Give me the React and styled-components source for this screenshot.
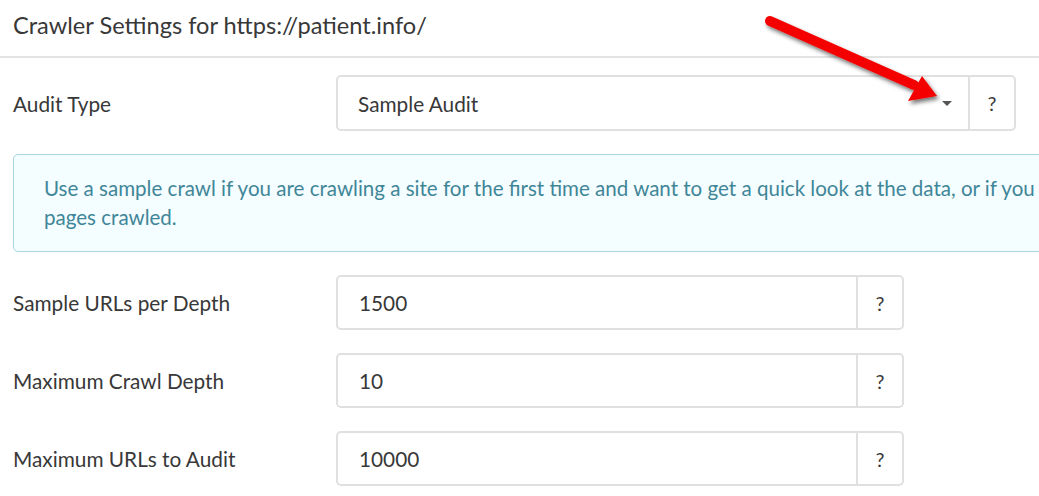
import React from 'react';
import styled, { createGlobalStyle } from 'styled-components';

const GlobalStyle = createGlobalStyle`
  html, body {
    margin: 0;
    padding: 0;
    overflow: hidden;
    background: #fff;
  }
  body {
    font-family: Lato, 'Open Sans', sans-serif;
    color: #383838;
  }
`;

const fields = [
  { label: 'Sample URLs per Depth', value: '1500' },
  { label: 'Maximum Crawl Depth', value: '10' },
  { label: 'Maximum URLs to Audit', value: '10000' },
];

const Caret = () => (
  <svg width='10' height='5' viewBox='0 0 10 5'>
    <path d='M0 0 L10 0 L5 5 Z' fill='#555' />
  </svg>
);

// red annotation arrow pointing at the dropdown caret
const Arrow = () => (
  <ArrowLayer width='1039' height='140' viewBox='0 0 1039 140'>
    <defs>
      <filter id='arrow-shadow' x='-20%' y='-20%' width='140%' height='140%'>
        <feDropShadow dx='2' dy='3' stdDeviation='2' floodColor='#000' floodOpacity='0.55' />
      </filter>
    </defs>
    <g filter='url(#arrow-shadow)'>
      <line x1='770' y1='21' x2='914' y2='85' stroke='#f40000' strokeWidth='10' strokeLinecap='round' />
      <path d='M937 96 L908 101 L922 76 Z' fill='#f40000' />
    </g>
  </ArrowLayer>
);

const App = () => {
  return (
    <Page>
      <GlobalStyle />
      <Header>Crawler Settings for https://patient.info/</Header>
      <Form>
        <FormRow>
          <Label>Audit Type</Label>
          <InputGroup width={680} height={56}>
            <Select>
              <span>Sample Audit</span>
              <Caret />
            </Select>
            <Addon>?</Addon>
          </InputGroup>
        </FormRow>
        <Info>
          Use a sample crawl if you are crawling a site for the first time and want to get a
          quick look at the data, or if you only want a limited number of
          <br />
          pages crawled.
        </Info>
        {fields.map((f) => (
          <FormRow key={f.label}>
            <Label>{f.label}</Label>
            <InputGroup width={568} height={55}>
              <Field defaultValue={f.value} />
              <Addon>?</Addon>
            </InputGroup>
          </FormRow>
        ))}
      </Form>
      <Arrow />
    </Page>
  );
};

export default App;

const Page = styled.div`
  position: relative;
  width: 1039px;
  height: 496px;
  overflow: hidden;
`;

const ArrowLayer = styled.svg`
  position: absolute;
  left: 0;
  top: 0;
  pointer-events: none;
`;

const Header = styled.div`
  box-sizing: border-box;
  height: 58px;
  padding: 11px 13px 0;
  font-size: 23.6px;
  line-height: 1.2;
  color: #383838;
  border-bottom: 2px solid #e3e3e3;
`;

const Form = styled.div`
  padding: 17px 0 0 13px;
`;

const FormRow = styled.div`
  display: flex;
  align-items: center;
  margin-bottom: 23px;
`;

const Label = styled.div`
  width: 323px;
  flex-shrink: 0;
  font-size: 20.8px;
  color: #383838;
`;

const InputGroup = styled.div`
  box-sizing: border-box;
  display: flex;
  width: ${(p) => p.width}px;
  height: ${(p) => p.height}px;
  border: 2px solid #e0e0e0;
  border-radius: 5px;
  background: #fff;
`;

const Select = styled.div`
  flex: 1;
  display: flex;
  align-items: center;
  justify-content: space-between;
  padding: 0 16px 0 20px;
  font-size: 20.8px;
  color: #383838;
`;

const Field = styled.input`
  flex: 1;
  min-width: 0;
  border: none;
  outline: none;
  background: transparent;
  padding: 0 0 0 21px;
  font-family: Lato, 'Open Sans', sans-serif;
  font-size: 20.8px;
  color: #383838;
`;

const Addon = styled.div`
  width: 44px;
  display: flex;
  align-items: center;
  justify-content: center;
  border-left: 2px solid #e0e0e0;
  font-size: 20px;
  color: #383838;
`;

const Info = styled.div`
  box-sizing: border-box;
  width: 1400px;
  margin-bottom: 23px;
  padding: 19px 30px;
  background: #f4fdff;
  border: 1.5px solid #a9d6df;
  border-radius: 5px;
  font-size: 20.56px;
  line-height: 29px;
  color: #3f8698;
  white-space: nowrap;
`;
